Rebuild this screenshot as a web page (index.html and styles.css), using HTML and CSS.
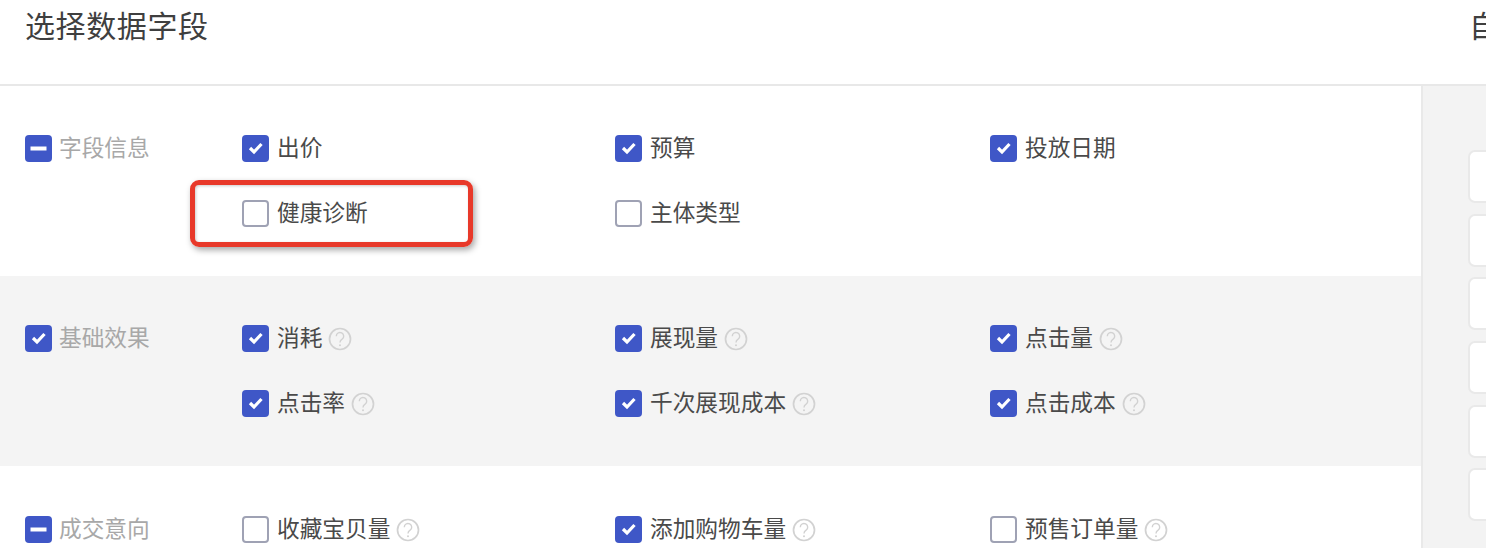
FILE: index.html
```html
<!DOCTYPE html>
<html lang="zh-CN">
<head>
<meta charset="utf-8">
<title>选择数据字段</title>
<link rel="stylesheet" href="styles.css">
</head>
<body>
<svg class="defs" width="0" height="0" aria-hidden="true">
  <symbol id="tick" viewBox="0 0 27 27"><path d="M8 13l4 4 7.500-8" fill="none" stroke="#fff" stroke-width="3.200"/></symbol>
  <symbol id="dash" viewBox="0 0 27 27"><rect x="5.500" y="11.500" width="16" height="4" fill="#fff"/></symbol>
  <symbol id="help" viewBox="0 0 24 24"><circle cx="12" cy="12" r="10.500" fill="none" stroke="#d2d2d2" stroke-width="1.700"/><path d="M8.300 9.200a3.700 3.700 0 1 1 5.800 3c-1.400.9-2.100 1.500-2.100 3.200" fill="none" stroke="#d2d2d2" stroke-width="1.400"/><circle cx="12" cy="18.200" r="1" fill="#d2d2d2"/></symbol>
</svg>
<div class="page">
  <header class="head">
    <h1 class="title main-title">选择数据字段</h1>
    <h1 class="title side-title">自定义</h1>
  </header>
  <div class="body">
    <main class="fields">
      <section class="group">
        <div class="group-label"><span class="box on"><svg><use href="#dash"/></svg></span><span class="text">字段信息</span></div>
        <div class="options">
          <div class="opt"><span class="box on"><svg><use href="#tick"/></svg></span><span class="text">出价</span></div>
          <div class="opt"><span class="box on"><svg><use href="#tick"/></svg></span><span class="text">预算</span></div>
          <div class="opt"><span class="box on"><svg><use href="#tick"/></svg></span><span class="text">投放日期</span></div>
          <div class="opt"><span class="box"></span><span class="text">健康诊断</span><i class="mark"></i></div>
          <div class="opt"><span class="box"></span><span class="text">主体类型</span></div>
        </div>
      </section>
      <section class="group shade">
        <div class="group-label"><span class="box on"><svg><use href="#tick"/></svg></span><span class="text">基础效果</span></div>
        <div class="options">
          <div class="opt"><span class="box on"><svg><use href="#tick"/></svg></span><span class="text">消耗</span><svg class="help"><use href="#help"/></svg></div>
          <div class="opt"><span class="box on"><svg><use href="#tick"/></svg></span><span class="text">展现量</span><svg class="help"><use href="#help"/></svg></div>
          <div class="opt"><span class="box on"><svg><use href="#tick"/></svg></span><span class="text">点击量</span><svg class="help"><use href="#help"/></svg></div>
          <div class="opt"><span class="box on"><svg><use href="#tick"/></svg></span><span class="text">点击率</span><svg class="help"><use href="#help"/></svg></div>
          <div class="opt"><span class="box on"><svg><use href="#tick"/></svg></span><span class="text">千次展现成本</span><svg class="help"><use href="#help"/></svg></div>
          <div class="opt"><span class="box on"><svg><use href="#tick"/></svg></span><span class="text">点击成本</span><svg class="help"><use href="#help"/></svg></div>
        </div>
      </section>
      <section class="group last">
        <div class="group-label"><span class="box on"><svg><use href="#dash"/></svg></span><span class="text">成交意向</span></div>
        <div class="options">
          <div class="opt"><span class="box"></span><span class="text">收藏宝贝量</span><svg class="help"><use href="#help"/></svg></div>
          <div class="opt"><span class="box on"><svg><use href="#tick"/></svg></span><span class="text">添加购物车量</span><svg class="help"><use href="#help"/></svg></div>
          <div class="opt"><span class="box"></span><span class="text">预售订单量</span><svg class="help"><use href="#help"/></svg></div>
        </div>
      </section>
    </main>
    <aside class="side">
      <div class="card"></div>
      <div class="card"></div>
      <div class="card"></div>
      <div class="card"></div>
      <div class="card"></div>
      <div class="card"></div>
    </aside>
  </div>
</div>
</body>
</html>
```
FILE: styles.css
```css
html, body {
  margin: 0;
  height: 548px;
  overflow: hidden;
  background: #fff;
}
body {
  font-family: "Liberation Sans", "Noto Sans CJK SC", sans-serif;
  color: #4a4a4a;
}
.defs { position: absolute; }
.page {
  width: 1486px;
  height: 548px;
  overflow: hidden;
}
.head {
  display: flex;
  height: 84px;
  border-bottom: 2px solid #e8e8e8;
  overflow: hidden;
}
.title {
  margin: 0;
  font-size: 30px;
  line-height: 54px;
  font-weight: 400;
  color: #3f3f3f;
  white-space: nowrap;
}
.main-title {
  width: 1444px;
  padding-left: 25px;
  flex: none;
  letter-spacing: .6px;
}
.side-title { flex: none; }
.body {
  display: flex;
  height: 462px;
}
.fields {
  width: 1421px;
  flex: none;
}
.group {
  display: flex;
  box-sizing: border-box;
  height: 190px;
  padding: 30px 0 30px 25px;
}
.shade { background: #f4f4f4; }
.last { padding-top: 31px; }
.group-label {
  width: 217px;
  height: 65px;
  flex: none;
  display: flex;
  align-items: center;
  gap: 7px;
  font-size: 22.700px;
  color: #a8a8a8;
}
.text { padding-bottom: 4px; }
.options {
  display: grid;
  grid-template-columns: 373px 375px 374px;
  grid-auto-rows: 65px;
}
.opt {
  position: relative;
  display: flex;
  align-items: center;
  font-size: 22.700px;
  color: #4a4a4a;
}
.box {
  box-sizing: border-box;
  flex: none;
  width: 27px;
  height: 27px;
  margin-right: 8px;
  border: 2px solid #9fa2b4;
  border-radius: 4px;
  background: #fff;
}
.box.on {
  border: 0;
  background: #3f57c7;
}
.group-label .box { margin-right: 0; }
.box svg {
  display: block;
  width: 27px;
  height: 27px;
}
.help {
  flex: none;
  width: 24px;
  height: 24px;
  margin-left: 6px;
}
.mark {
  position: absolute;
  left: -52px;
  top: -1px;
  box-sizing: border-box;
  width: 283px;
  height: 67px;
  border: 5px solid #e8392a;
  border-radius: 9px;
  box-shadow: 2px 3px 6px rgba(0, 0, 0, .35), inset 1px 1px 3px rgba(0, 0, 0, .2);
  pointer-events: none;
}
.side {
  flex: 1;
  box-sizing: border-box;
  border-left: 2px solid #e9e9e9;
  background: #f3f3f3;
  padding: 64px 0 0 45px;
  display: flex;
  flex-direction: column;
  gap: 10.700px;
}
.card {
  flex: none;
  width: 120px;
  height: 53px;
  box-sizing: border-box;
  border: 2px solid #e9e9e9;
  border-radius: 7px;
  background: #fff;
}
```
